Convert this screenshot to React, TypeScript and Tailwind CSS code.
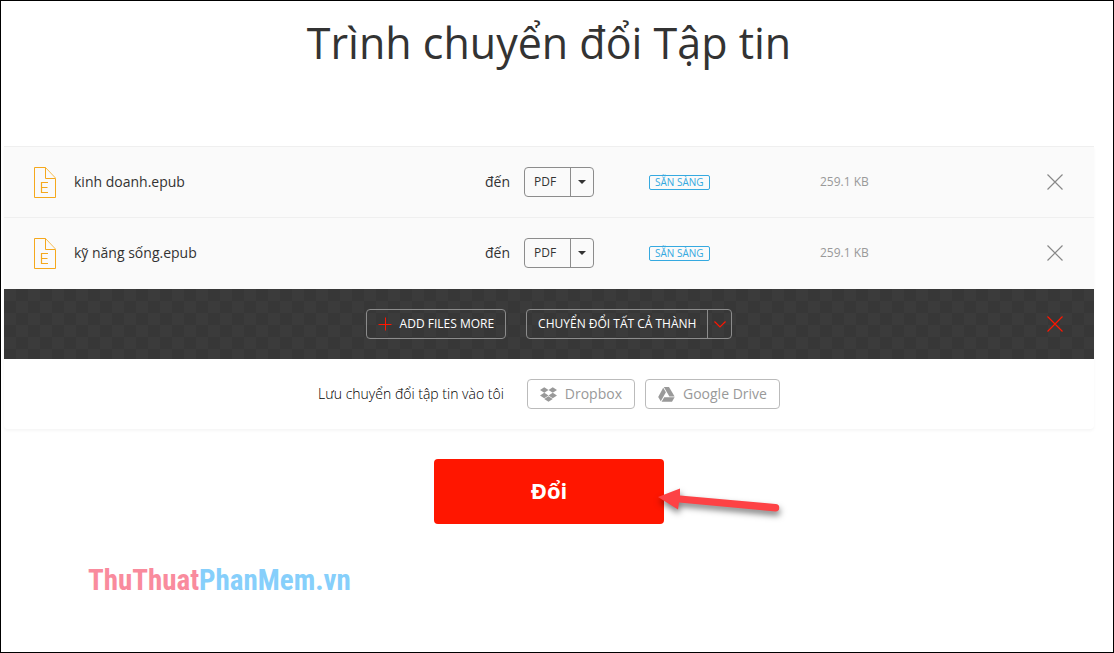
import { useState } from "react";
import { FaDropbox } from "react-icons/fa";

const formats = ["PDF", "MOBI", "DOCX", "TXT"];

const initialFiles = [
  { id: 1, name: "kinh doanh.epub", size: "259.1 KB" },
  { id: 2, name: "kỹ năng sống.epub", size: "259.1 KB" },
];

function EpubIcon() {
  return (
    <svg width="22" height="31" viewBox="0 0 22 31" fill="none" stroke="#f5a81c">
      <path d="M11.5 0.5H0.5V30.5H21.5V11.5" />
      <path d="M11.5 0.5V11.5H21.5" />
      <path d="M11.5 0.5L21.5 11" strokeOpacity="0.75" />
      <path d="M14 15.5H7.5V25.5H14M7.5 20.5H13.5" strokeWidth="1.2" />
    </svg>
  );
}

function CrossIcon() {
  return (
    <svg width="18" height="18" viewBox="0 0 18 18" fill="none" stroke="currentColor" strokeWidth="1.2">
      <path d="M1.5 1.5L16.5 16.5M16.5 1.5L1.5 16.5" />
    </svg>
  );
}

function DriveIcon() {
  return (
    <svg width="17" height="15" viewBox="0 0 17 15" fill="currentColor">
      <path d="M5.800 0H11L16.600 9.400H11.400Z" />
      <path d="M5.200 0.800L7.900 5.300L2.800 14.200L0.200 9.900Z" />
      <path d="M6.200 10.200H16.600L14 14.800H3.600Z" />
    </svg>
  );
}

function FormatSelect({ label }: { label: string }) {
  return (
    <div className="grid h-[30px] w-[70px] rounded border border-[#8c8c8c]">
      <select
        aria-label={label}
        className="col-start-1 row-start-1 w-full appearance-none bg-transparent pl-[9px] text-xs text-[#333] outline-none"
      >
        {formats.map((format) => (
          <option key={format}>{format}</option>
        ))}
      </select>
      <span className="pointer-events-none col-start-1 row-start-1 flex w-[23px] items-center justify-center justify-self-end border-l border-[#8c8c8c] text-[#333]">
        <svg width="8" height="4" viewBox="0 0 8 4" fill="currentColor">
          <path d="M0 0H8L4 4Z" />
        </svg>
      </span>
    </div>
  );
}

function PointerArrow() {
  return (
    <svg
      className="pointer-events-none absolute top-[26px] left-[222px] drop-shadow-[1px_4px_3px_rgba(0,0,0,0.5)]"
      width="126"
      height="36"
      viewBox="0 0 126 36"
      fill="#fd4245"
    >
      <path d="M2 12L24 3.500V10.500L119.500 19A3.500 3.500 0 0 1 119.500 26.500L23 17.500L22 24.500Z" />
    </svg>
  );
}

export default function App() {
  const [files, setFiles] = useState(initialFiles);

  const removeFile = (id: number) => {
    setFiles(files.filter((file) => file.id !== id));
  };

  return (
    <div className="min-h-screen border border-black bg-white pr-[19px] pb-14 pl-[3px] font-['Open_Sans','Noto_Sans',sans-serif] text-sm text-[#333]">
      <h1 className="pt-2 text-center text-[43px] leading-[68px] font-normal">
        Trình chuyển đổi Tập tin
      </h1>

      <main className="mt-[69px]">
        <div className="rounded-b shadow-[0_2px_3px_rgba(0,0,0,0.04)]">
          {/* File list */}
          <ul className="border-b border-[#fafafa] bg-[#fafafa]">
            {files.map((file) => (
              <li
                key={file.id}
                className="grid h-[71px] grid-cols-[40px_411fr_39px_125fr_171fr_226fr_18px] items-center border-t border-[#efefef] px-[30px]"
              >
                <EpubIcon />
                <span>{file.name}</span>
                <span>đến</span>
                <FormatSelect label={`đến: ${file.name}`} />
                <span className="justify-self-start rounded-xs border border-[#35a9e0] px-[5px] text-[10px] leading-[13px] text-[#35a9e0]">
                  SẴN SÀNG
                </span>
                <span className="text-xs text-[#999]">{file.size}</span>
                <button
                  type="button"
                  aria-label={`Remove ${file.name}`}
                  onClick={() => removeFile(file.id)}
                  className="text-[#888]"
                >
                  <CrossIcon />
                </button>
              </li>
            ))}
          </ul>

          {/* Actions for the whole list */}
          <div className="grid h-[70px] grid-cols-[18px_1fr_18px] items-center bg-[#3b3b3b] bg-[repeating-conic-gradient(#373737_0_25%,#3b3b3b_0_50%)] bg-size-[24px_24px] px-[30px]">
            <div className="col-start-2 flex justify-center gap-5 text-xs text-white">
              <button
                type="button"
                className="flex h-[30px] items-center gap-2 rounded border border-[#8c8c8c] px-[11px]"
              >
                <svg width="14" height="14" viewBox="0 0 14 14" stroke="#ff1600">
                  <path d="M0.5 7.5H13.5M7.5 0.5V13.5" />
                </svg>
                ADD FILES MORE
              </button>
              <div className="flex h-[30px] rounded border border-[#8c8c8c]">
                <button type="button" className="px-[11px]">
                  CHUYỂN ĐỔI TẤT CẢ THÀNH
                </button>
                <button
                  type="button"
                  aria-label="Chọn định dạng"
                  className="flex w-6 items-center justify-center border-l border-[#8c8c8c]"
                >
                  <svg width="12" height="7" viewBox="0 0 12 7" fill="none" stroke="#ff1600" strokeWidth="1.2">
                    <path d="M0.5 0.5L6 6L11.5 0.5" />
                  </svg>
                </button>
              </div>
            </div>
            <button
              type="button"
              aria-label="Remove all"
              onClick={() => setFiles([])}
              className="text-[#ff1600]"
            >
              <CrossIcon />
            </button>
          </div>

          {/* Cloud storage */}
          <div className="flex h-[70px] items-center justify-center">
            <span className="mr-[23px] font-light text-black">Lưu chuyển đổi tập tin vào tôi</span>
            <div className="flex gap-[10px] text-[#999]">
              <button
                type="button"
                className="flex h-[30px] items-center gap-2 rounded border border-[#bbb] px-3"
              >
                <FaDropbox size={17} />
                Dropbox
              </button>
              <button
                type="button"
                className="flex h-[30px] items-center gap-2 rounded border border-[#bbb] px-3"
              >
                <DriveIcon />
                Google Drive
              </button>
            </div>
          </div>
        </div>

        <div className="relative mx-auto mt-[30px] w-[230px]">
          <button
            type="button"
            className="h-[65px] w-full rounded bg-[#ff1600] pb-0.5 text-[22px] font-bold text-white"
          >
            Đổi
          </button>
          <PointerArrow />
        </div>
      </main>

      <footer className="mt-10 pl-[84px] font-['Roboto_Condensed','Roboto',sans-serif] text-[29px] leading-8 font-bold">
        <a href="#">
          <span className="text-[#f98b9d]">ThuThuat</span>
          <span className="text-[#86cffb]">PhanMem.vn</span>
        </a>
      </footer>
    </div>
  );
}
